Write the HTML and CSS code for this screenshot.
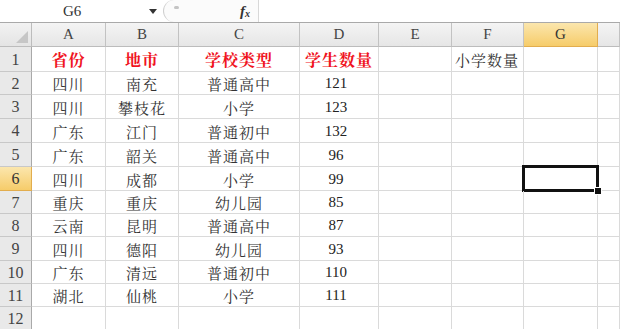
FILE: index.html
```html
<!DOCTYPE html>
<html lang="zh-CN">
<head>
<meta charset="utf-8">
<title>Sheet</title>
<link rel="stylesheet" href="styles.css">
</head>
<body>
<div class="fbar">
  <div class="namebox">
    <span class="ref">G6</span>
    <svg class="dd" width="8" height="5" viewBox="0 0 8 5"><polygon points="0,0 8,0 4,5" fill="#333"/></svg>
  </div>
  <div class="fxzone">
    <span class="dot"></span>
    <span class="fx">f<sub>x</sub></span>
  </div>
  <div class="input"></div>
</div>
<div class="grid">
  <div class="corner"><svg width="12" height="12" viewBox="0 0 12 12"><polygon points="12,0 12,12 0,12" fill="#c6c6c6"/></svg></div>
  <div class="ch">A</div><div class="ch">B</div><div class="ch">C</div><div class="ch">D</div><div class="ch">E</div><div class="ch">F</div><div class="ch sel">G</div><div class="ch"></div>

  <div class="rh">1</div><div class="c hd">省份</div><div class="c hd">地市</div><div class="c hd">学校类型</div><div class="c hd">学生数量</div><div class="c"></div><div class="c left">小学数量</div><div class="c"></div><div class="c"></div>
  <div class="rh">2</div><div class="c">四川</div><div class="c">南充</div><div class="c">普通高中</div><div class="c num">121</div><div class="c"></div><div class="c"></div><div class="c"></div><div class="c"></div>
  <div class="rh">3</div><div class="c">四川</div><div class="c">攀枝花</div><div class="c">小学</div><div class="c num">123</div><div class="c"></div><div class="c"></div><div class="c"></div><div class="c"></div>
  <div class="rh">4</div><div class="c">广东</div><div class="c">江门</div><div class="c">普通初中</div><div class="c num">132</div><div class="c"></div><div class="c"></div><div class="c"></div><div class="c"></div>
  <div class="rh">5</div><div class="c">广东</div><div class="c">韶关</div><div class="c">普通高中</div><div class="c num">96</div><div class="c"></div><div class="c"></div><div class="c"></div><div class="c"></div>
  <div class="rh sel">6</div><div class="c">四川</div><div class="c">成都</div><div class="c">小学</div><div class="c num">99</div><div class="c"></div><div class="c"></div><div class="c active"><span class="handle"></span></div><div class="c"></div>
  <div class="rh">7</div><div class="c">重庆</div><div class="c">重庆</div><div class="c">幼儿园</div><div class="c num">85</div><div class="c"></div><div class="c"></div><div class="c"></div><div class="c"></div>
  <div class="rh">8</div><div class="c">云南</div><div class="c">昆明</div><div class="c">普通高中</div><div class="c num">87</div><div class="c"></div><div class="c"></div><div class="c"></div><div class="c"></div>
  <div class="rh">9</div><div class="c">四川</div><div class="c">德阳</div><div class="c">幼儿园</div><div class="c num">93</div><div class="c"></div><div class="c"></div><div class="c"></div><div class="c"></div>
  <div class="rh">10</div><div class="c">广东</div><div class="c">清远</div><div class="c">普通初中</div><div class="c num">110</div><div class="c"></div><div class="c"></div><div class="c"></div><div class="c"></div>
  <div class="rh">11</div><div class="c">湖北</div><div class="c">仙桃</div><div class="c">小学</div><div class="c num">111</div><div class="c"></div><div class="c"></div><div class="c"></div><div class="c"></div>
  <div class="rh">12</div><div class="c"></div><div class="c"></div><div class="c"></div><div class="c"></div><div class="c"></div><div class="c"></div><div class="c"></div><div class="c"></div>
</div>
</body>
</html>
```
FILE: styles.css
```css
* { box-sizing: border-box; }
html, body { margin: 0; padding: 0; background: #fff; overflow: hidden; }
body { width: 620px; height: 329px; font-family: "Noto Serif CJK SC", "Noto Sans CJK SC", serif; color: #333; }

.fbar {
  display: flex;
  height: 23px;
  border-bottom: 1px solid #a9a9a9;
  background: #fff;
}
.namebox {
  width: 163px;
  display: flex;
  align-items: center;
  padding-left: 63px;
  font-family: "Liberation Serif", serif;
  font-size: 15px;
  color: #333;
}
.namebox .ref { flex: 1; }
.namebox .dd { margin-right: 6px; margin-top: 1px; }
.fxzone {
  width: 96px;
  display: flex;
  align-items: center;
  justify-content: space-between;
  padding: 0 8px 0 10px;
  border: 1px solid #cfcfcf;
  border-right: 1px solid #d8d8d8;
  border-bottom: none;
  border-top: none;
  border-radius: 11px 0 0 11px;
  background: #fbfbfb;
}
.fxzone .dot {
  width: 5px; height: 3px; border-radius: 2px; background: #c4c4c4; margin-top: -8px;
}
.fxzone .fx {
  font-family: "Liberation Serif", serif;
  font-style: italic;
  font-weight: bold;
  font-size: 15px;
  color: #333;
}
.fxzone .fx sub { font-size: 10px; vertical-align: -1px; }
.input { flex: 1; }

.grid {
  display: grid;
  grid-template-columns: 32px 74px 73px 121px 79px 73px 72px 74px 22px;
  grid-template-rows: 24px 25px 23px 24px 24px 24px 24px 23px 23px 24px 23px 23px 23px;
}
.corner {
  background: linear-gradient(#f2f2f2, #e4e4e4);
  border-right: 1px solid #bcbcbc;
  border-bottom: 1px solid #bcbcbc;
  display: flex;
  align-items: flex-end;
  justify-content: flex-end;
  padding: 0 3px 3px 0;
}
.ch, .rh {
  display: flex;
  align-items: center;
  justify-content: center;
  font-family: "Liberation Serif", serif;
  font-size: 15px;
  color: #444;
  background: linear-gradient(#f4f4f4, #e6e6e6);
  border-right: 1px solid #c2c2c2;
  border-bottom: 1px solid #bcbcbc;
}
.rh {
  background: #e9e9e9;
  border-bottom: 1px solid #c8c8c8;
  border-right: 1px solid #a9a9a9;
  font-size: 16px;
  padding-top: 1px;
}
.ch.sel, .rh.sel {
  background: linear-gradient(#fbe6ad, #f6cc6a);
  border-right-color: #e2ad4e;
  border-bottom-color: #e2ad4e;
  color: #333;
}
.c {
  display: flex;
  align-items: center;
  justify-content: center;
  font-size: 15px;
  letter-spacing: 1px;
  border-right: 1px solid #dadada;
  border-bottom: 1px solid #dadada;
  padding-top: 1px;
  white-space: nowrap;
  position: relative;
}
.c.hd { color: #f0141e; font-weight: bold; font-size: 16px; }
.c.num {
  font-family: "Liberation Serif", serif;
  font-size: 15px;
  letter-spacing: 0;
  padding-right: 6px;
  color: #222;
}
.c.left { justify-content: flex-start; padding-left: 3px; }
.c.active::after {
  content: "";
  position: absolute;
  left: -2px; top: -2px; right: -2px; bottom: -2px;
  border: 3px solid #111;
}
.c.active .handle {
  position: absolute;
  right: -4px; bottom: -4px;
  width: 6px; height: 6px;
  background: #111;
  outline: 1px solid #fff;
  z-index: 2;
}
```
